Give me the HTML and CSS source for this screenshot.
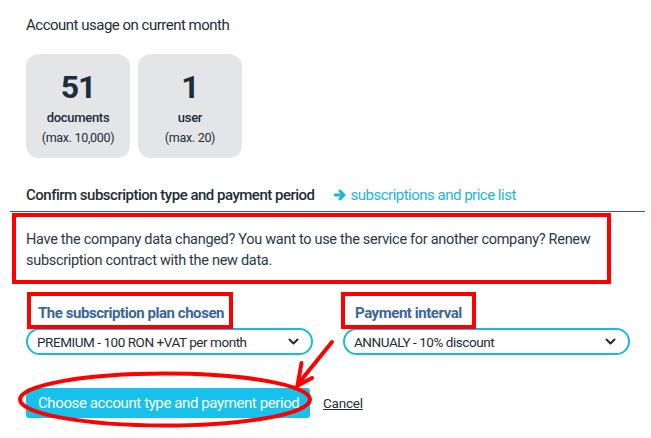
FILE: index.html
```html
<!DOCTYPE html>
<html>
<head>
<meta charset="utf-8">
<link rel="stylesheet" href="styles.css">
</head>
<body>
<div class="page">
  <div class="usage">
    <h2 class="usage-title">Account usage on current month</h2>
    <div class="cards">
      <div class="card">
        <div class="card-num">51</div>
        <div class="card-label">documents</div>
        <div class="card-max">(max. 10,000)</div>
      </div>
      <div class="card">
        <div class="card-num">1</div>
        <div class="card-label">user</div>
        <div class="card-max">(max. 20)</div>
      </div>
    </div>
  </div>

  <div class="confirm-row">
    <span class="confirm-title">Confirm subscription type and payment period</span>
    <a class="price-link" href="#"><svg class="arrow-ico" width="13" height="12" viewBox="0 0 13 12"><path d="M1 6h8M6 2l4 4-4 4" fill="none" stroke="#1cb4e4" stroke-width="3" stroke-linecap="round" stroke-linejoin="round"/></svg>subscriptions and price list</a>
  </div>
  <div class="divider"></div>

  <div class="notice">
    <p class="notice-text">Have the company data changed? You want to use the service for another company? Renew subscription contract with the new data.</p>
    <div class="mark mark-notice"></div>
  </div>

  <div class="form-row">
    <div class="field">
      <div class="label-wrap">
        <label class="field-label">The subscription plan chosen</label>
        <div class="mark mark-label1"></div>
      </div>
      <div class="select">
        <span>PREMIUM - 100 RON +VAT per month</span>
        <svg class="chev" width="11" height="7" viewBox="0 0 11 7"><path d="M1.5 1.5l4 4 4-4" fill="none" stroke="#1d2d3a" stroke-width="2" stroke-linecap="round" stroke-linejoin="round"/></svg>
      </div>
    </div>
    <div class="field">
      <div class="label-wrap">
        <label class="field-label">Payment interval</label>
        <div class="mark mark-label2"></div>
      </div>
      <div class="select">
        <span>ANNUALY - 10% discount</span>
        <svg class="chev" width="11" height="7" viewBox="0 0 11 7"><path d="M1.5 1.5l4 4 4-4" fill="none" stroke="#1d2d3a" stroke-width="2" stroke-linecap="round" stroke-linejoin="round"/></svg>
      </div>
    </div>
  </div>

  <div class="actions">
    <button class="btn-primary">Choose account type and payment period</button>
    <a class="cancel" href="#">Cancel</a>
  </div>

  <svg class="annot" width="651" height="438" viewBox="0 0 651 438">
    <ellipse cx="165" cy="399.5" rx="145" ry="26" fill="none" stroke="#ff0000" stroke-width="4"/>
    <path d="M332 342L298 384" fill="none" stroke="#ff0000" stroke-width="4" stroke-linecap="round"/>
    <path d="M301.5 363L297.5 385.5L312 378" fill="none" stroke="#ff0000" stroke-width="4" stroke-linecap="round" stroke-linejoin="miter"/>
  </svg>
</div>
</body>
</html>
```
FILE: styles.css
```css
* { box-sizing: border-box; }
html, body { margin: 0; padding: 0; background: #fff; }
body {
  font-family: Roboto, "Liberation Sans", sans-serif;
  color: #1d2d3a;
  width: 651px;
  height: 438px;
  overflow: hidden;
}
.page { position: relative; padding-top: 14px; }
.usage { padding-left: 26px; }
.usage-title {
  margin: 0;
  font-size: 15px;
  font-weight: 400;
  line-height: 22px;
  letter-spacing: -0.5px;
}
.cards { display: flex; gap: 8px; margin-top: 18px; }
.card {
  width: 104px;
  height: 104px;
  background: #e3e5e7;
  border-radius: 13px;
  display: flex;
  flex-direction: column;
  align-items: center;
  padding-top: 14px;
}
.card-num { font-size: 32px; font-weight: 700; line-height: 38px; letter-spacing: -1px; }
.card-label { font-size: 13px; font-weight: 500; line-height: 18px; margin-top: 3px; letter-spacing: -0.3px; }
.card-max { font-size: 12.5px; line-height: 18px; margin-top: 2px; letter-spacing: -0.3px; }

.confirm-row {
  padding-left: 26px;
  margin-top: 26px;
  display: flex;
  align-items: center;
  height: 22px;
}
.confirm-title { font-size: 15px; font-weight: 500; letter-spacing: -0.5px; }
.price-link {
  margin-left: 19px;
  color: #1cb4e4;
  text-decoration: none;
  font-size: 15px;
  letter-spacing: -0.5px;
  display: flex;
  align-items: center;
}
.arrow-ico { margin-right: 4px; }
.divider { margin: 5px 6px 0 10px; height: 1px; background: #2d5b86; }

.notice { position: relative; padding: 17px 0 0 26px; height: 72px; }
.notice-text {
  margin: 0;
  width: 590px;
  font-size: 14.5px;
  line-height: 21px;
  letter-spacing: -0.3px;
  color: #26394a;
}
.mark { position: absolute; border: 4px solid #ff0000; pointer-events: none; }
.mark-notice { left: 12px; top: 1px; width: 599px; height: 71px; }

.form-row { display: flex; gap: 30px; padding-left: 26px; margin-top: 7px; }
.field { width: 287px; display: flex; flex-direction: column; }
.label-wrap { position: relative; height: 37px; display: flex; align-items: flex-end; padding-bottom: 5px; }
.field-label { font-size: 15px; font-weight: 700; color: #3a6697; letter-spacing: -0.45px; line-height: 20px; padding-left: 12px; }
.mark-label1 { left: 1px; top: 1px; width: 206px; height: 37px; }
.mark-label2 { left: -2px; top: 1px; width: 135px; height: 37px; }
.select {
  height: 27px;
  border: 2px solid #1ab8e6;
  border-radius: 14px;
  display: flex;
  align-items: center;
  justify-content: space-between;
  padding: 0 12px 0 9px;
  font-size: 13.5px;
  letter-spacing: -0.45px;
  color: #1d2d3a;
}
.chev { display: block; }

.actions { display: flex; align-items: center; padding-left: 26px; margin-top: 33px; }
.btn-primary {
  width: 284px;
  height: 30px;
  border: 0;
  border-radius: 3px;
  background: #17c1ec;
  color: #fff;
  font-family: Roboto, "Liberation Sans", sans-serif;
  font-size: 15px;
  letter-spacing: -0.4px;
  text-align: left;
  padding: 0 0 0 12px;
}
.cancel {
  margin-left: 13px;
  color: #1d2d3a;
  font-size: 13.5px;
  letter-spacing: -0.2px;
  text-decoration: underline;
}
.annot { position: absolute; left: 0; top: 0; pointer-events: none; }
```
